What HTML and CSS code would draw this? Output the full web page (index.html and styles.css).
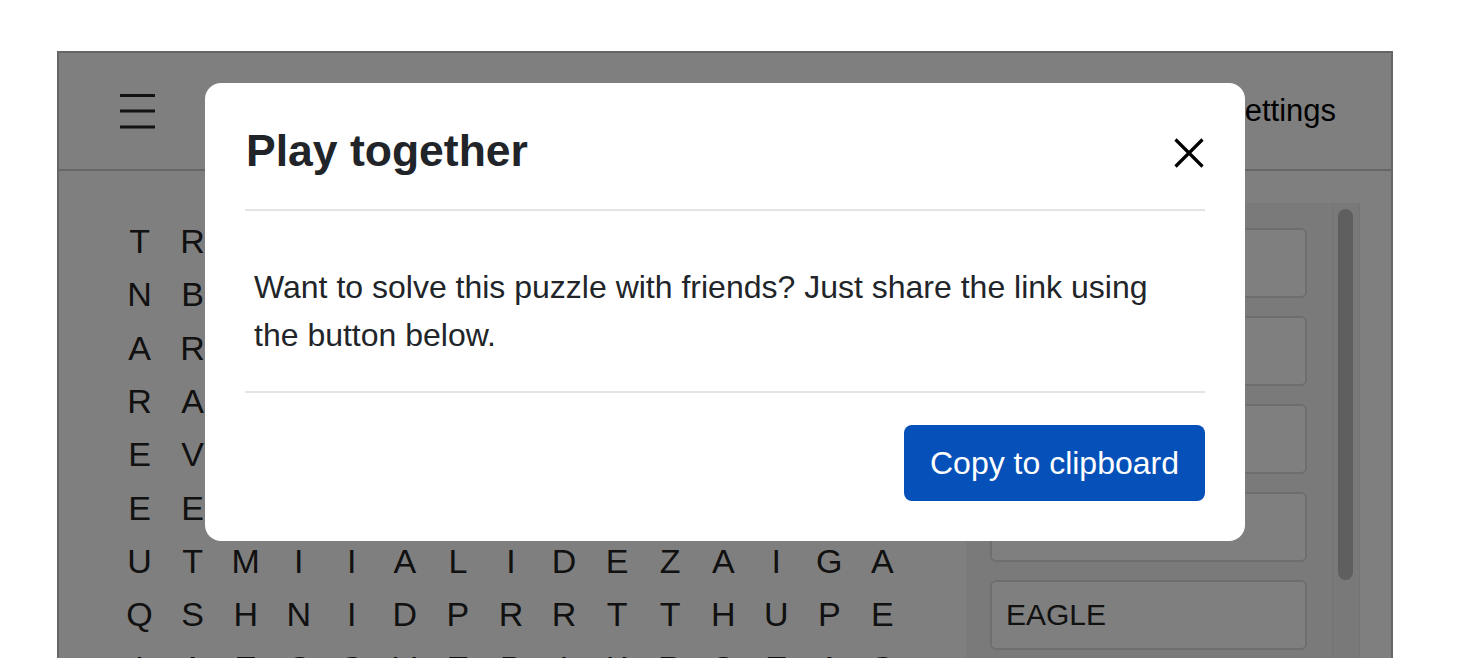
FILE: index.html
```html
<!DOCTYPE html>
<html lang="en">
<head>
<meta charset="utf-8">
<title>Word Search</title>
<link rel="stylesheet" href="styles.css">
</head>
<body>
<div class="stage">
  <div class="app">
    <header class="topbar">
      <button class="menu-btn" aria-label="Menu">
        <svg width="35" height="36" viewBox="0 0 35 36"><path d="M0 2.5H35M0 18H35M0 34H35" stroke="#212529" stroke-width="3" stroke-linecap="round"/></svg>
      </button>
      <div class="settings">Settings</div>
    </header>
    <main class="main">
      <div class="grid">
        <span>T</span><span>R</span><span>O</span><span>P</span><span>I</span><span>C</span><span>A</span><span>L</span><span>B</span><span>I</span><span>R</span><span>D</span><span>S</span><span>N</span><span>K</span>
        <span>N</span><span>B</span><span>E</span><span>A</span><span>R</span><span>O</span><span>T</span><span>T</span><span>E</span><span>R</span><span>W</span><span>O</span><span>L</span><span>F</span><span>X</span>
        <span>A</span><span>R</span><span>H</span><span>I</span><span>N</span><span>O</span><span>L</span><span>Y</span><span>N</span><span>X</span><span>E</span><span>L</span><span>K</span><span>M</span><span>O</span>
        <span>R</span><span>A</span><span>V</span><span>E</span><span>N</span><span>S</span><span>Q</span><span>U</span><span>I</span><span>D</span><span>C</span><span>R</span><span>A</span><span>B</span><span>T</span>
        <span>E</span><span>V</span><span>O</span><span>L</span><span>E</span><span>M</span><span>U</span><span>R</span><span>S</span><span>E</span><span>A</span><span>L</span><span>O</span><span>W</span><span>L</span>
        <span>E</span><span>E</span><span>G</span><span>E</span><span>C</span><span>K</span><span>O</span><span>H</span><span>A</span><span>R</span><span>E</span><span>M</span><span>O</span><span>L</span><span>E</span>
        <span>U</span><span>T</span><span>M</span><span>I</span><span>I</span><span>A</span><span>L</span><span>I</span><span>D</span><span>E</span><span>Z</span><span>A</span><span>I</span><span>G</span><span>A</span>
        <span>Q</span><span>S</span><span>H</span><span>N</span><span>I</span><span>D</span><span>P</span><span>R</span><span>R</span><span>T</span><span>T</span><span>H</span><span>U</span><span>P</span><span>E</span>
        <span>I</span><span>A</span><span>E</span><span>C</span><span>S</span><span>V</span><span>E</span><span>B</span><span>I</span><span>K</span><span>R</span><span>O</span><span>E</span><span>A</span><span>S</span>
        <span>B</span><span>O</span><span>N</span><span>G</span><span>O</span><span>T</span><span>A</span><span>P</span><span>I</span><span>R</span><span>E</span><span>G</span><span>R</span><span>E</span><span>T</span>
      </div>
      <aside class="panel">
        <div class="word-list">
          <div class="word">TIGER</div>
          <div class="word">RAVEN</div>
          <div class="word">ZEBRA</div>
          <div class="word">HIPPO</div>
          <div class="word">EAGLE</div>
          <div class="word">LEMUR</div>
        </div>
        <div class="scroll-track"><div class="scroll-thumb"></div></div>
      </aside>
    </main>
  </div>
  <div class="backdrop"></div>
  <div class="modal" role="dialog">
    <div class="modal-header">
      <h5 class="modal-title">Play together</h5>
      <button class="close-btn" aria-label="Close">
        <svg width="30" height="30" viewBox="0 0 30 30"><path d="M1.5 1.5L28.5 28.5M28.5 1.5L1.5 28.5" stroke="#000" stroke-width="3.2"/></svg>
      </button>
    </div>
    <div class="modal-body">
      <p>Want to solve this puzzle with friends? Just share the link using the button below.</p>
    </div>
    <div class="modal-footer">
      <button class="copy-btn">Copy to clipboard</button>
    </div>
  </div>
</div>
</body>
</html>
```
FILE: styles.css
```css
html, body {
  margin: 0;
  padding: 0;
  background: #fff;
  height: 658px;
  overflow: hidden;
  font-family: "Liberation Sans", Arial, Helvetica, sans-serif;
  color: #212529;
}

.stage {
  position: relative;
  margin: 51px 0 0 57px;
  width: 1336px;
}

.app {
  border: 2px solid #cccccc;
  background: #fff;
  height: 900px;
}

.topbar {
  height: 116px;
  border-bottom: 2px solid #cccccc;
  display: flex;
  align-items: center;
  justify-content: space-between;
  padding: 0 55px 0 61px;
}

.menu-btn {
  border: 0;
  background: none;
  padding: 0;
  display: flex;
}

.settings {
  font-size: 31px;
  color: #000;
}

.main {
  display: flex;
  align-items: flex-start;
  padding: 32px 0 0 54px;
}

.grid {
  margin-top: 12px;
  display: grid;
  grid-template-columns: repeat(15, 53.07px);
  grid-auto-rows: 53.3px;
  font-size: 34px;
  color: #222;
}

.grid span {
  display: flex;
  align-items: center;
  justify-content: center;
}

.panel {
  margin-left: 57px;
  width: 394px;
  height: 700px;
  background: #f5f5f5;
  display: flex;
}

.word-list {
  flex: 1;
  padding: 25px 25px 0 24px;
  display: flex;
  flex-direction: column;
  gap: 18px;
}

.word {
  height: 66px;
  border: 2px solid #dddddd;
  border-radius: 6px;
  background: #fff;
  display: flex;
  align-items: center;
  padding-left: 14px;
  font-size: 30px;
  color: #222;
}

.scroll-track {
  width: 26px;
  border-left: 1px solid #e6e6e6;
  border-right: 1px solid #e6e6e6;
  background: #f3f3f3;
  padding-top: 6px;
  display: flex;
  justify-content: center;
}

.scroll-thumb {
  width: 15px;
  height: 371px;
  border-radius: 8px;
  background: #bfbfbf;
}

.backdrop {
  position: absolute;
  inset: 0;
  background: rgba(0, 0, 0, 0.5);
}

.modal {
  position: absolute;
  left: 148px;
  top: 32px;
  width: 960px;
  padding: 0 40px;
  background: #fff;
  border-radius: 16px;
}

.modal-header {
  display: flex;
  align-items: center;
  justify-content: space-between;
  padding: 41px 0 32px;
  border-bottom: 2px solid #e4e4e4;
}

.modal-title {
  margin: 0;
  padding-left: 1px;
  font-size: 44.5px;
  font-weight: 700;
  line-height: 53px;
  color: #212529;
}

.close-btn {
  border: 0;
  background: none;
  padding: 0;
  display: flex;
  margin: 5px 1px 0 0;
}

.modal-body {
  padding: 52px 40px 32px 9px;
}

.modal-body p {
  margin: 0;
  font-size: 32px;
  line-height: 48px;
  color: #212529;
}

.modal-footer {
  display: flex;
  justify-content: flex-end;
  padding: 32px 0 40px;
  border-top: 2px solid #e4e4e4;
}

.copy-btn {
  font-family: inherit;
  font-size: 32px;
  line-height: 48px;
  padding: 14px 26px;
  border: 0;
  border-radius: 8px;
  background: #0551b9;
  color: #fff;
}
```
